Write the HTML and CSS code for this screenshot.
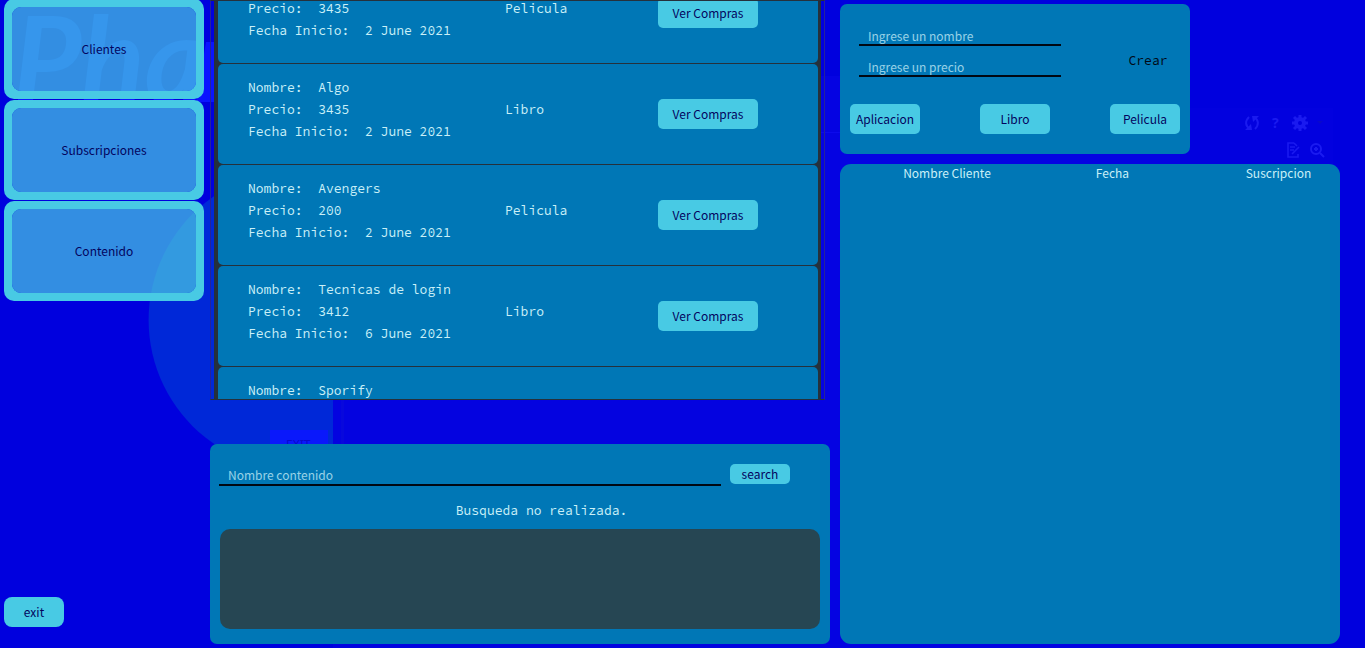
FILE: index.html
```html
<!DOCTYPE html>
<html lang="es">
<head>
<meta charset="utf-8">
<meta name="viewport" content="width=device-width, initial-scale=1">
<title>Contenido</title>
<link rel="stylesheet" href="styles.css">
</head>
<body>
<svg class="backdrop" width="1365" height="648" viewBox="0 0 1365 648" aria-hidden="true">
  <rect x="333" y="400" width="507" height="248" fill="#0403e0"/>
  <rect x="820" y="76" width="370" height="572" fill="#0503e2"/>
  <rect x="820" y="132" width="370" height="1" fill="#0c0aec"/>
  <rect x="1180" y="108" width="153" height="57" fill="#0201df"/>
  <path d="M333 174A150 150 0 1 0 333 466Z" fill="#0028d8"/>
  <rect x="341" y="400" width="3" height="48" fill="#0808dc"/>
  <rect x="270" y="430" width="58" height="20" fill="#0a18fb"/>
  <text class="ghost-exit" x="286" y="449">EXIT</text>
  <text class="ghost-title" x="13" y="102">Pha</text>
  <path d="M206 42h8v60h-18z" fill="#0a14ff"/>
  <g fill="none" stroke="#1a1af0" stroke-width="2">
    <path d="M1250 129c-5-3-5-8-1-12M1254 117c5 3 5 8 1 12"/>
    <path d="M1294 143h-6v14h10v-3M1294 143l3 3M1290 147h5M1290 150h4M1292 154l7-7" stroke-width="1.6"/>
    <circle cx="1316" cy="149" r="5"/><path d="M1320 153l4 4M1314 149h4M1316 147v4"/>
    <circle cx="1300" cy="123" r="4" stroke-width="4"/>
    <path d="M1300 115v3M1300 128v3M1292 123h3M1305 123h3M1294 117l3 3M1303 126l3 3M1306 117l-3 3M1297 126l-3 3" stroke-width="3"/>
  </g>
  <path d="M1252 116h7l-6 6zM1252 130h-7l6-6z" fill="#1a1af0"/>
  <path d="M1317 121h6l-3 3z" fill="#0808cc"/>
  <text class="ghost-help" x="1272" y="128">?</text>
</svg>

<div class="page">
  <nav class="sidebar">
    <button class="nav-card" type="button"><span class="nav-face">Clientes</span></button>
    <button class="nav-card" type="button"><span class="nav-face">Subscripciones</span></button>
    <button class="nav-card" type="button"><span class="nav-face">Contenido</span></button>
    <button class="btn exit" type="button">exit</button>
  </nav>

  <main class="content">
    <section class="frame">
      <div class="viewport">
        <ul class="items">
          <li class="item">
            <div><p>Nombre:&nbsp; Pelicula</p><p>Precio:&nbsp; 3435</p><p>Fecha Inicio:&nbsp; 2 June 2021</p></div>
            <p class="kind">Pelicula</p><button class="btn" type="button">Ver Compras</button>
          </li>
          <li class="item">
            <div><p>Nombre:&nbsp; Algo</p><p>Precio:&nbsp; 3435</p><p>Fecha Inicio:&nbsp; 2 June 2021</p></div>
            <p class="kind">Libro</p><button class="btn" type="button">Ver Compras</button>
          </li>
          <li class="item">
            <div><p>Nombre:&nbsp; Avengers</p><p>Precio:&nbsp; 200</p><p>Fecha Inicio:&nbsp; 2 June 2021</p></div>
            <p class="kind">Pelicula</p><button class="btn" type="button">Ver Compras</button>
          </li>
          <li class="item">
            <div><p>Nombre:&nbsp; Tecnicas de login</p><p>Precio:&nbsp; 3412</p><p>Fecha Inicio:&nbsp; 6 June 2021</p></div>
            <p class="kind">Libro</p><button class="btn" type="button">Ver Compras</button>
          </li>
          <li class="item">
            <div><p>Nombre:&nbsp; Sporify</p></div>
          </li>
        </ul>
      </div>
    </section>

    <section class="panel search">
      <form class="search-row">
        <input class="field" type="text" placeholder="Nombre contenido" aria-label="Nombre contenido">
        <button class="btn search-btn" type="button">search</button>
      </form>
      <p class="status">Busqueda no realizada.</p>
      <div class="results"></div>
    </section>
  </main>

  <aside class="side">
    <form class="panel create">
      <div class="create-top">
        <div class="fields">
          <input class="field" type="text" placeholder="Ingrese un nombre" aria-label="Nombre">
          <input class="field" type="text" placeholder="Ingrese un precio" aria-label="Precio">
        </div>
        <button class="create-btn" type="button">Crear</button>
      </div>
      <div class="kinds">
        <button class="btn" type="button">Aplicacion</button>
        <button class="btn" type="button">Libro</button>
        <button class="btn" type="button">Pelicula</button>
      </div>
    </form>
    <section class="panel clients">
      <table>
        <thead><tr><th scope="col">Nombre Cliente</th><th scope="col">Fecha</th><th scope="col">Suscripcion</th></tr></thead>
      </table>
    </section>
  </aside>
</div>
</body>
</html>
```
FILE: styles.css
```css
:root {
  --blue: #0000de;
  --panel: #0077b6;
  --cyan: #48cae4;
  --navy: #03045e;
  --pale: #caf0f8;
  --dark: #25313c;
  --sans: "Noto Sans CJK SC", "Noto Sans", sans-serif;
  --mono: "Source Code Pro", "Liberation Mono", monospace;
}

* {
  box-sizing: border-box;
}

body {
  margin: 0;
  background: var(--blue);
  color: var(--pale);
  font: 13px/22px var(--mono);
}

p,
ul {
  margin: 0;
  padding: 0;
  list-style: none;
}

button,
input {
  font: 12px/20px var(--sans);
  border: 0;
  padding: 0;
}

.backdrop {
  position: absolute;
  top: 0;
  left: 0;
  z-index: -1;
  max-width: 100%;
}

.ghost-title {
  font: italic bold 118px Lato, sans-serif;
  fill: #0a1cff;
}

.ghost-exit {
  font: 12px "Noto Sans", sans-serif;
  fill: #0808cc;
}

.ghost-help {
  font: bold 14px "Noto Sans", sans-serif;
  fill: #1a1af0;
}

.page {
  display: grid;
  grid-template-columns: 206px minmax(0, 620fr) minmax(0, 510fr);
  height: 100vh;
  min-height: 560px;
  padding: 0 25px 4px 4px;
  overflow: hidden;
}

.sidebar {
  display: flex;
  flex-direction: column;
  gap: 1px;
  margin-top: -1px;
  padding: 0 6px 17px 0;
}

.nav-card {
  display: flex;
  height: 100px;
  padding: 8px;
  border-radius: 10px;
  overflow: hidden;
  background: none;
}

.nav-face {
  flex: 1;
  align-self: stretch;
  display: flex;
  align-items: center;
  justify-content: center;
  border-radius: 9px;
  background: rgba(72, 202, 228, 0.7);
  box-shadow: 0 0 0 16px var(--cyan);
  color: var(--navy);
}

.btn {
  height: 30px;
  border-radius: 5px;
  background: var(--cyan);
  color: var(--navy);
}

.exit {
  width: 60px;
  margin-top: auto;
  border-radius: 8px;
}

.content {
  display: flex;
  flex-direction: column;
  gap: 44px;
  min-height: 0;
}

.frame {
  flex: 1;
  min-height: 0;
  display: flex;
  margin-right: 5px;
  padding: 0 3px;
  border: 1px solid #24249a;
  border-top-color: var(--dark);
  border-bottom-color: var(--dark);
}

.viewport {
  flex: 1;
  overflow: hidden;
  padding: 0 3px 0 4px;
  background: var(--dark);
}

.items {
  display: grid;
  gap: 1px;
  margin-top: -38px;
}

.item {
  display: grid;
  grid-template-columns: 257fr 153fr 100px;
  height: 100px;
  padding: 13px 60px 0 30px;
  border-radius: 5px;
  background: var(--panel);
}

.kind {
  padding-top: 22px;
}

.item .btn {
  margin-top: 22px;
}

.panel {
  border-radius: 7px;
  background: var(--panel);
}

.search {
  padding: 20px 10px 15px 9px;
}

.search-row {
  display: flex;
  gap: 9px;
  padding-right: 30px;
}

.field {
  display: block;
  width: 100%;
  height: 20px;
  padding: 0 9px;
  border-bottom: 2px solid #000814;
  background: transparent;
  color: var(--pale);
  line-height: 18px;
}

.field::placeholder {
  color: var(--pale);
  opacity: 0.75;
}

.search-row .field {
  flex: 1;
  height: 22px;
}

.search-btn {
  width: 60px;
  height: 20px;
}

.status {
  padding: 14px 0 7px 44px;
  text-align: center;
}

.results {
  height: 100px;
  margin-left: 1px;
  border-radius: 10px;
  background: #264653;
}

.side {
  display: flex;
  flex-direction: column;
  gap: 10px;
  padding: 4px 0 0 10px;
}

.create {
  width: 70%;
  min-width: 310px;
  padding: 22px 10px 20px;
}

.create-top {
  display: flex;
  justify-content: space-between;
  align-items: flex-end;
  padding-left: 9px;
}

.fields {
  display: grid;
  gap: 11px;
  width: 202px;
}

.create-btn {
  width: 64px;
  height: 32px;
  background: transparent;
  color: #000814;
  font-family: var(--mono);
  font-size: 13px;
}

.kinds {
  display: flex;
  justify-content: space-between;
  margin-top: 27px;
}

.kinds .btn {
  width: 70px;
}

.clients {
  flex: 1;
  border-radius: 11px;
}

.clients table {
  width: 100%;
  table-layout: fixed;
  border-collapse: collapse;
  font: 12px/18px var(--sans);
}

.clients th {
  width: 33%;
  padding: 0;
  font-weight: 400;
}

.clients th:first-child {
  width: 38%;
  padding-left: 24px;
}

.clients th:last-child {
  width: 29%;
  padding-left: 22px;
}
```
